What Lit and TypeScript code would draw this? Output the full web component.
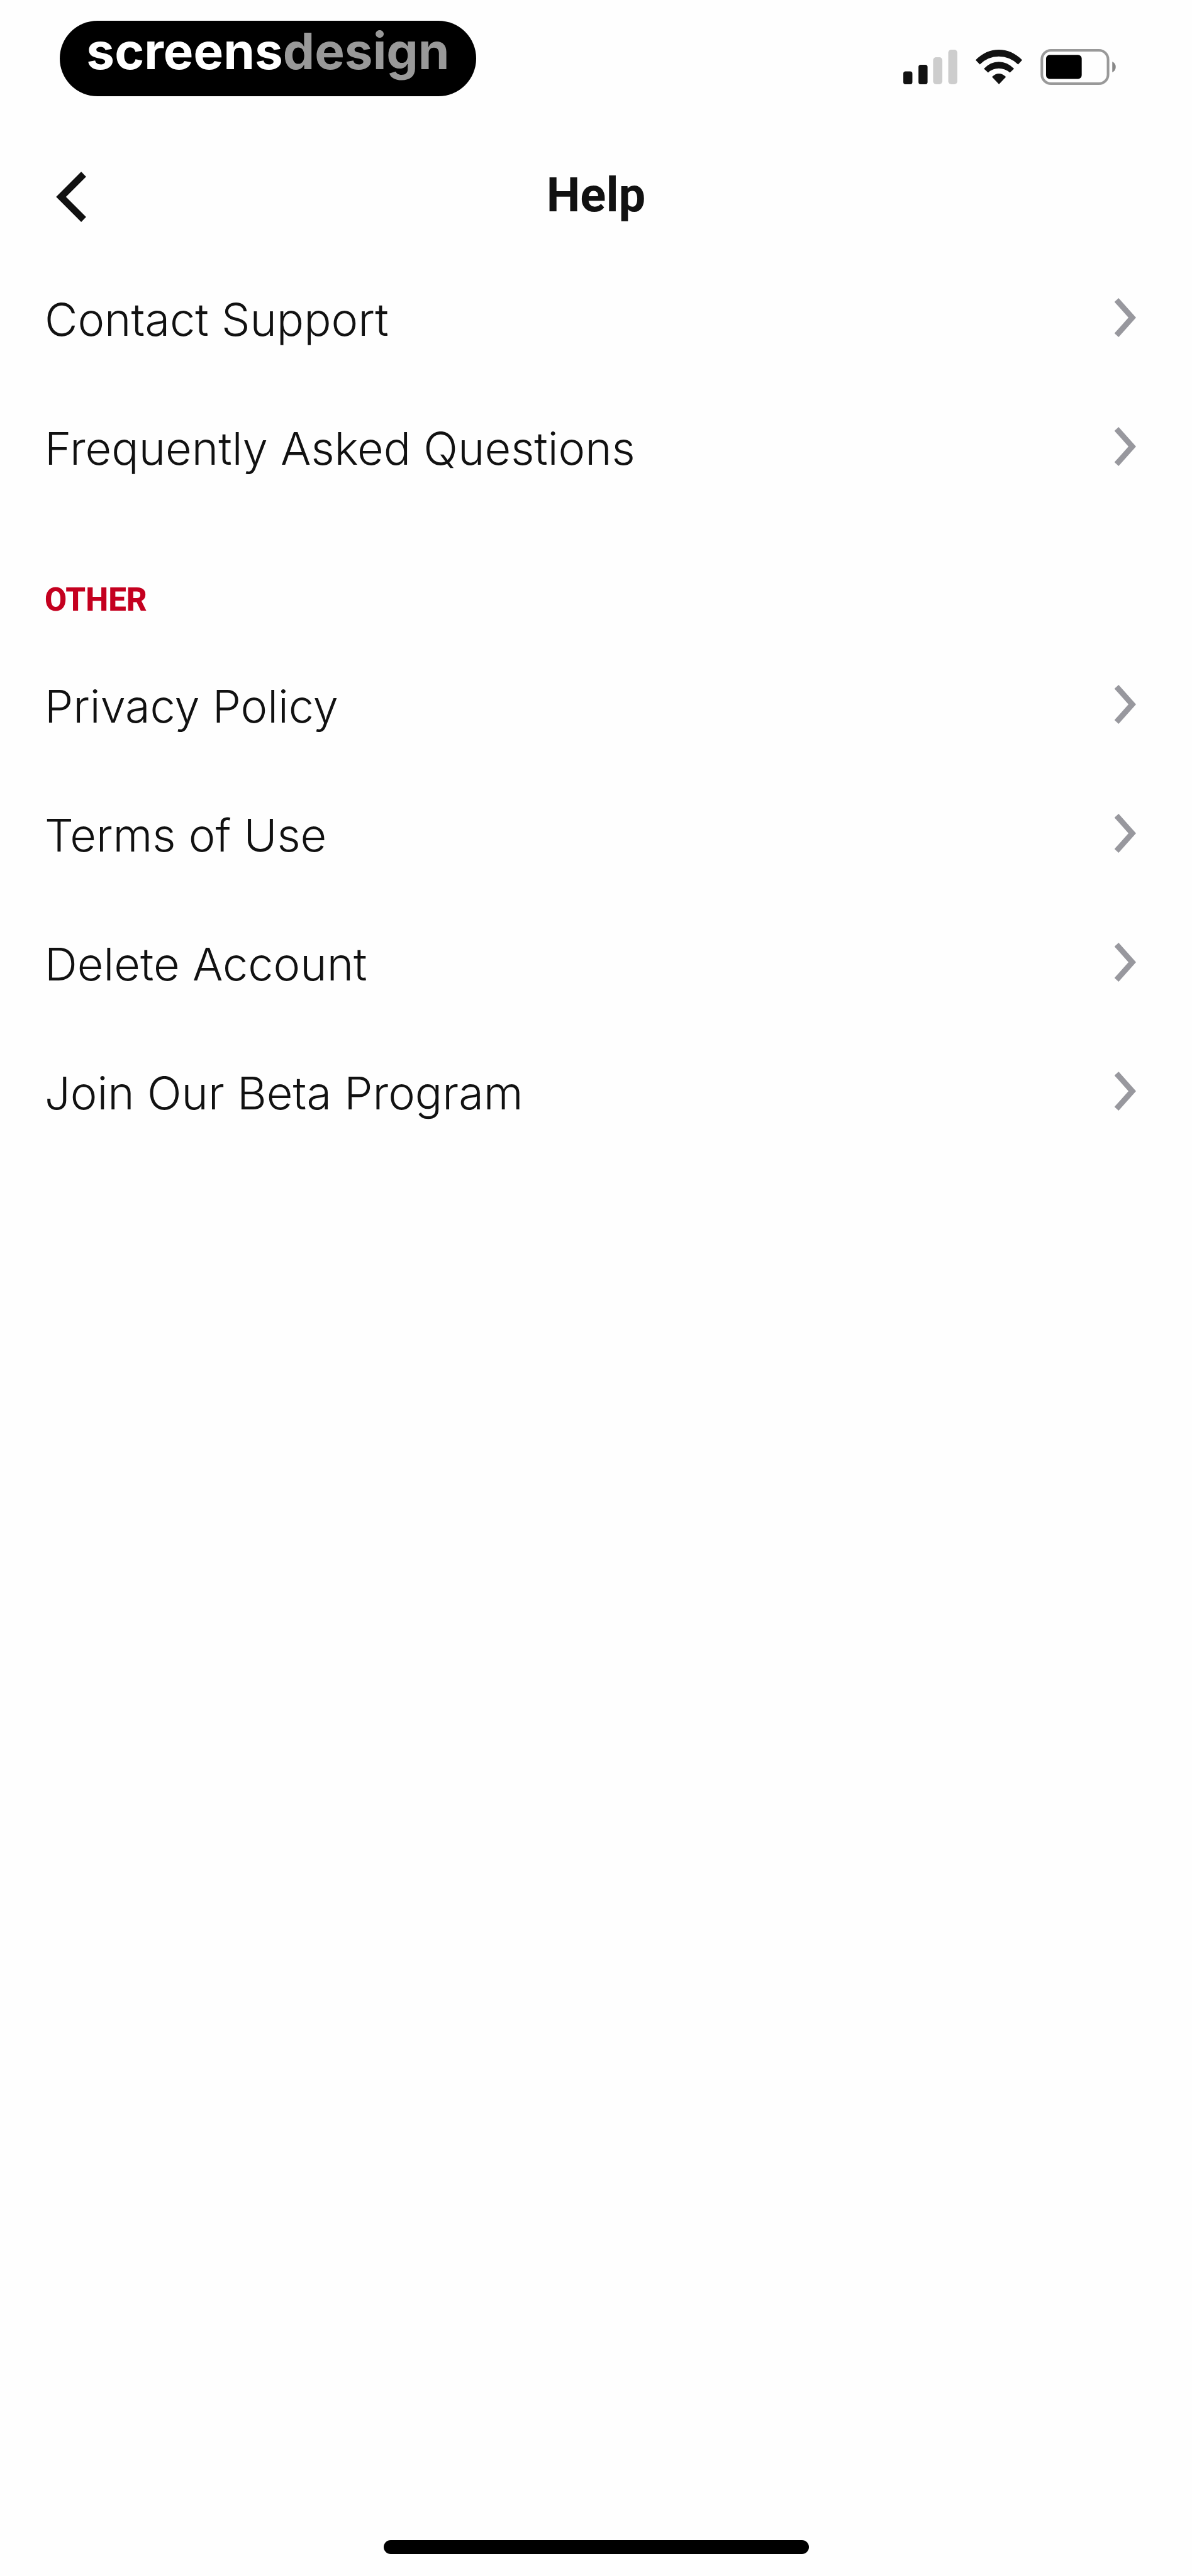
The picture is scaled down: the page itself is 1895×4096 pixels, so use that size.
import { LitElement, html, css } from 'lit';
import { customElement, property } from 'lit/decorators.js';

interface HelpLink {
  label: string;
  href: string;
}

interface HelpSection {
  title?: string;
  links: HelpLink[];
}

const sections: HelpSection[] = [
  {
    links: [
      { label: 'Contact Support', href: '#contact' },
      { label: 'Frequently Asked Questions', href: '#faq' },
    ],
  },
  {
    title: 'OTHER',
    links: [
      { label: 'Privacy Policy', href: '#privacy' },
      { label: 'Terms of Use', href: '#terms' },
      { label: 'Delete Account', href: '#delete-account' },
      { label: 'Join Our Beta Program', href: '#beta' },
    ],
  },
];

@customElement('status-bar')
export class StatusBar extends LitElement {
  static styles = css`
    :host {
      display: flex;
      justify-content: space-between;
      align-items: flex-start;
      box-sizing: border-box;
      height: 224px;
      padding: 33px 121px 0 95px;
    }
    .brand {
      display: flex;
      justify-content: center;
      box-sizing: border-box;
      width: 662px;
      height: 120px;
      border-radius: 60px;
      background: #000;
      color: #fff;
      font-family: Inter, sans-serif;
      font-size: 80px;
      font-weight: 700;
      line-height: 96px;
    }
    .brand .muted {
      color: #999;
    }
    .indicators {
      display: flex;
      align-items: center;
      gap: 29px;
      padding-top: 45px;
    }
    svg {
      display: block;
    }
  `;

  render() {
    return html`
      <div class="brand"><span>screens</span><span class="muted">design</span></div>
      <div class="indicators">
        <svg width="86" height="55" viewBox="111 92 292 187" aria-label="Signal">
          <rect x="111" y="209" width="49" height="70" rx="12" fill="#111" />
          <rect x="193" y="174" width="49" height="105" rx="12" fill="#111" />
          <rect x="272" y="133" width="50" height="146" rx="16" fill="#cdcdcd" />
          <rect x="354" y="92" width="49" height="187" rx="16" fill="#cdcdcd" />
        </svg>
        <svg width="74" height="55" viewBox="502 92 253 188" aria-label="Wi-Fi">
          <g fill="#111">
            <path d="M502 148Q558 92 628 92T755 148L733 172Q686 129 628 129T525 172Z" />
            <path d="M547 195Q583 158 628 158T711 195L688 217Q662 194 628 194T570 217Z" />
            <path d="M591 240Q628 204 667 240L629 280Z" />
          </g>
        </svg>
        <svg width="120" height="57" viewBox="855 88 411 196" aria-label="Battery">
          <rect x="862" y="95" width="362" height="182" rx="50" fill="none" stroke="#999" stroke-width="14" />
          <rect x="885" y="120" width="195" height="131" rx="20" fill="#000" />
          <path d="M1247 157Q1266 166 1266 186T1247 215Z" fill="#888" />
        </svg>
      </div>
    `;
  }
}

@customElement('help-row')
export class HelpRow extends LitElement {
  static styles = css`
    :host {
      display: block;
    }
    .row {
      display: flex;
      justify-content: space-between;
      align-items: center;
      height: 205px;
      padding: 0 89px 0 71px;
      color: #111;
      text-decoration: none;
    }
    .label {
      padding-top: 6px;
      font-family: Inter, sans-serif;
      font-size: 72px;
      font-weight: 300;
      line-height: 88px;
    }
    .chevron {
      display: block;
      flex: none;
    }
  `;

  @property() label = '';
  @property() href = '';

  render() {
    return html`
      <a class="row" href=${this.href}>
        <span class="label">${this.label}</span>
        <svg class="chevron" width="34" height="62" viewBox="0 0 34 62" fill="none" stroke="#98989e" stroke-width="9">
          <path d="M3 3L28 31L3 59" />
        </svg>
      </a>
    `;
  }
}

@customElement('app-root')
export class AppRoot extends LitElement {
  static styles = css`
    :host {
      display: flex;
      flex-direction: column;
      min-height: 100vh;
      background: #fefefe;
      color: #111;
      font-family: Roboto, sans-serif;
    }
    .header {
      display: grid;
      grid-template-columns: 1fr auto 1fr;
      align-items: center;
      height: 178px;
      padding: 0 89px;
    }
    .back {
      justify-self: start;
      padding: 0;
      border: none;
      background: none;
    }
    .back svg {
      display: block;
    }
    .title {
      margin: 0;
      padding-bottom: 6px;
      font-size: 76px;
      font-weight: 700;
      line-height: 96px;
    }
    .content {
      flex: 1;
    }
    .section-title {
      box-sizing: border-box;
      height: 205px;
      margin: 0;
      padding: 110px 71px 0;
      color: #c4001f;
      font-size: 51px;
      font-weight: 800;
      line-height: 64px;
    }
    .home-indicator {
      align-self: center;
      width: 676px;
      max-width: 100%;
      height: 22px;
      margin-bottom: 35px;
      border-radius: 11px;
      background: #000;
    }
  `;

  render() {
    return html`
      <status-bar></status-bar>
      <header class="header">
        <button class="back" aria-label="Back">
          <svg width="48" height="80" viewBox="0 0 48 80" fill="none" stroke="#111" stroke-width="11">
            <path d="M44 4L8 40L44 76" />
          </svg>
        </button>
        <h1 class="title">Help</h1>
      </header>
      <main class="content">
        ${sections.map(section => html`
          <section>
            ${section.title ? html`<h2 class="section-title">${section.title}</h2>` : ''}
            ${section.links.map(link => html`
              <help-row .label=${link.label} .href=${link.href}></help-row>
            `)}
          </section>
        `)}
      </main>
      <div class="home-indicator"></div>
    `;
  }
}
